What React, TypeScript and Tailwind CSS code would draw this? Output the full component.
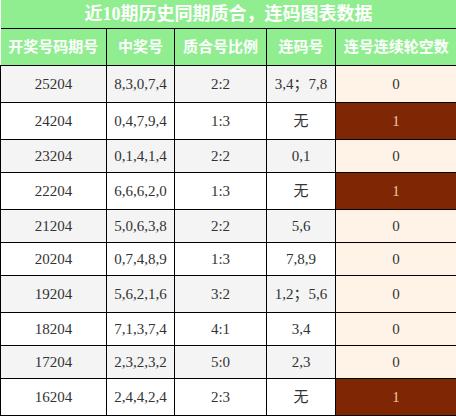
const rows = [
  { id: "25204", nums: "8,3,0,7,4", ratio: "2:2", lian: "3,4；7,8", gap: 0, tall: true },
  { id: "24204", nums: "0,4,7,9,4", ratio: "1:3", lian: "无", gap: 1, tall: true },
  { id: "23204", nums: "0,1,4,1,4", ratio: "2:2", lian: "0,1", gap: 0, tall: false },
  { id: "22204", nums: "6,6,6,2,0", ratio: "1:3", lian: "无", gap: 1, tall: true },
  { id: "21204", nums: "5,0,6,3,8", ratio: "2:2", lian: "5,6", gap: 0, tall: false },
  { id: "20204", nums: "0,7,4,8,9", ratio: "1:3", lian: "7,8,9", gap: 0, tall: false },
  { id: "19204", nums: "5,6,2,1,6", ratio: "3:2", lian: "1,2；5,6", gap: 0, tall: true },
  { id: "18204", nums: "7,1,3,7,4", ratio: "4:1", lian: "3,4", gap: 0, tall: false },
  { id: "17204", nums: "2,3,2,3,2", ratio: "5:0", lian: "2,3", gap: 0, tall: false },
  { id: "16204", nums: "2,4,4,2,4", ratio: "2:3", lian: "无", gap: 1, tall: true },
];

const headers = ["开奖号码期号", "中奖号", "质合号比例", "连码号", "连号连续轮空数"];

export default function App() {
  return (
    <div className="w-[456px] h-[416px] overflow-hidden bg-white" style={{ fontFamily: '"Liberation Serif", "Noto Sans CJK SC", serif' }}>
      <table className="w-[456px] table-fixed border-collapse text-center">
        <colgroup>
          <col className="w-[106px]" />
          <col className="w-[68px]" />
          <col className="w-[92px]" />
          <col className="w-[69px]" />
          <col className="w-[121px]" />
        </colgroup>
        <thead>
          <tr className="h-[28px] bg-[#90ee90]">
            <th colSpan={5} className="border-b border-black p-0 text-[18px] font-bold leading-[28px] text-white">
              近10期历史同期质合，连码图表数据
            </th>
          </tr>
          <tr className="h-[37px] bg-[#90ee90]">
            {headers.map((h, i) => (
              <th
                key={h}
                className={
                  i === 0
                    ? "border-y border-black p-0 text-[15px] font-bold text-white"
                    : "border border-r-0 border-black p-0 text-[15px] font-bold text-white"
                }
              >
                {h}
              </th>
            ))}
          </tr>
        </thead>
        <tbody className="text-[15px] text-[#333]">
          {rows.map((r, i) => (
            <tr key={r.id} className={(r.tall ? "h-[37px] " : "h-[33px] ") + (i % 2 === 0 ? "bg-[#f4f4f4]" : "bg-white")}>
              <td className="border border-black p-0 leading-[20px]">{r.id}</td>
              <td className="border border-black p-0 leading-[20px]">{r.nums}</td>
              <td className="border border-black p-0 leading-[20px]">{r.ratio}</td>
              <td className="border border-black p-0 leading-[20px]">{r.lian}</td>
              <td
                className={
                  r.gap === 1
                    ? "border border-black bg-[#7f2704] p-0 leading-[20px] text-[#f0c8a8]"
                    : "border border-black bg-[#fff3e8] p-0 leading-[20px]"
                }
              >
                {r.gap}
              </td>
            </tr>
          ))}
        </tbody>
      </table>
    </div>
  );
}
